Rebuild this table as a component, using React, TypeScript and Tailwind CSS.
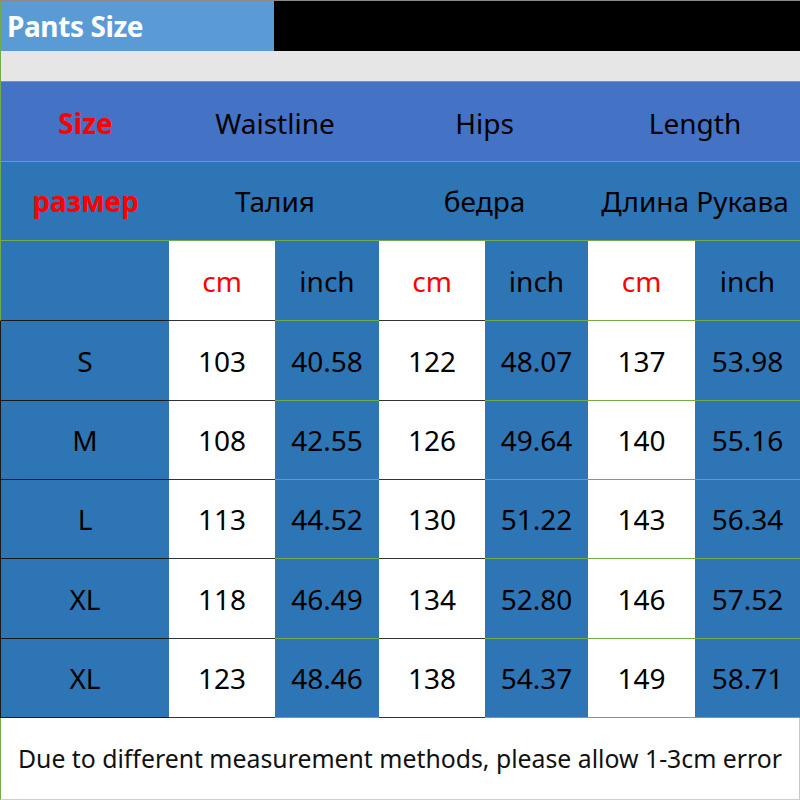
import React from "react";

const cols = "grid grid-cols-[169px_106px_104px_106px_103px_107px_105px]";
const font = { fontFamily: '"Noto Sans", "Open Sans", sans-serif' };

const data = [
  ["S", "103", "40.58", "122", "48.07", "137", "53.98", "h-[80px]"],
  ["M", "108", "42.55", "126", "49.64", "140", "55.16", "h-[79px]"],
  ["L", "113", "44.52", "130", "51.22", "143", "56.34", "h-[79px]"],
  ["XL", "118", "46.49", "134", "52.80", "146", "57.52", "h-[80px]"],
  ["XL", "123", "48.46", "138", "54.37", "149", "58.71", "h-[79px]"],
];

export default function App() {
  return (
    <div className="w-[800px] h-[800px] bg-white overflow-hidden text-black" style={font}>
      <div className="h-px bg-[#8a8a8a]" />
      <div className="flex h-[50px]">
        <div className="w-[274px] bg-[#5b9bd5] flex items-center pl-[6px] border-l border-[#70ad47]">
          <span className="text-white font-bold text-[28px] tracking-[-0.4px]">Pants Size</span>
        </div>
        <div className="flex-1 bg-black" />
      </div>
      <div className="h-[31px] bg-[#e6e6e6] border-b border-[#70ad47] border-l" />
      <div className={`${cols} h-[80px] bg-[#4472c4] border-b border-l border-[#70ad47] text-[28px]`}>
        <div className="flex items-center justify-center text-[#ff0000] font-bold pt-[2px]">Size</div>
        <div className="col-span-2 flex items-center justify-center pt-[2px]">Waistline</div>
        <div className="col-span-2 flex items-center justify-center pt-[2px]">Hips</div>
        <div className="col-span-2 flex items-center justify-center pt-[2px]">Length</div>
      </div>
      <div className={`${cols} h-[79px] bg-[#2e75b6] border-b border-l border-[#70ad47] text-[28px]`}>
        <div className="flex items-center justify-center text-[#ff0000] font-bold">размер</div>
        <div className="col-span-2 flex items-center justify-center">Талия</div>
        <div className="col-span-2 flex items-center justify-center">бедра</div>
        <div className="col-span-2 flex items-center justify-center">Длина Рукава</div>
      </div>
      <div className={`${cols} h-[80px] text-[28px]`}>
        <div className="bg-[#2e75b6] border-b border-l border-[#1a1a1a] border-l-[#70ad47]" />
        {[0, 1, 2].map((i) => (
          <React.Fragment key={i}>
            <div className={`bg-white flex items-center justify-center text-[#ff0000] border-b ${i === 2 ? "border-[#70ad47]" : "border-[#333]"}`}>cm</div>
            <div className="bg-[#2e75b6] flex items-center justify-center border-b border-[#70ad47]">inch</div>
          </React.Fragment>
        ))}
      </div>
      {data.map((r, idx) => (
        <div key={idx} className={`${cols} ${r[7]} text-[28px]`}>
          <div className="bg-[#2e75b6] border-b border-l border-[#1a1a1a] flex items-center justify-center">{r[0]}</div>
          <div className="bg-white border-b border-[#333] flex items-center justify-center">{r[1]}</div>
          <div className="bg-[#2e75b6] border-b border-[#70ad47] flex items-center justify-center">{r[2]}</div>
          <div className="bg-white border-b border-[#333] flex items-center justify-center">{r[3]}</div>
          <div className="bg-[#2e75b6] border-b border-[#70ad47] flex items-center justify-center">{r[4]}</div>
          <div className="bg-white border-b border-[#70ad47] flex items-center justify-center">{r[5]}</div>
          <div className="bg-[#2e75b6] border-b border-[#70ad47] flex items-center justify-center">{r[6]}</div>
        </div>
      ))}
      <div className="h-[82px] bg-white border-l border-[#70ad47] border-r border-r-[#c8c8c8] border-b border-b-[#c8d0dc] flex items-center justify-center">
        <span className="text-[24.8px] text-[#111]">Due to different measurement methods, please allow 1-3cm error</span>
      </div>
    </div>
  );
}
